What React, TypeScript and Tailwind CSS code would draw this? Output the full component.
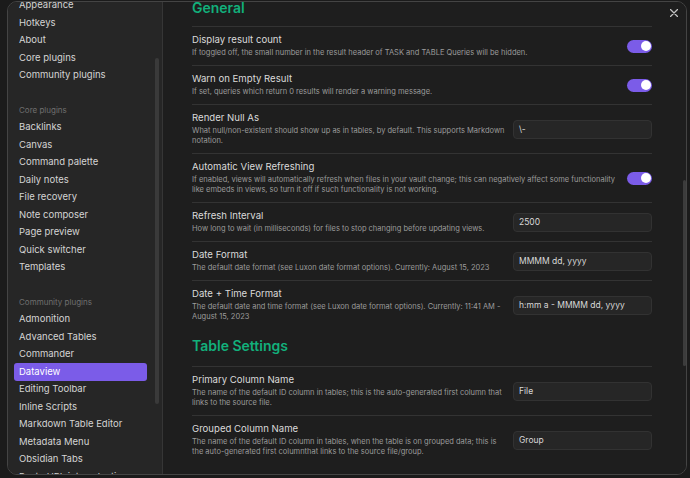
import React from "react";

const group1 = ["Appearance", "Hotkeys", "About", "Core plugins", "Community plugins"];
const group2 = [
  "Backlinks",
  "Canvas",
  "Command palette",
  "Daily notes",
  "File recovery",
  "Note composer",
  "Page preview",
  "Quick switcher",
  "Templates",
];
const group3 = [
  "Admonition",
  "Advanced Tables",
  "Commander",
  "Dataview",
  "Editing Toolbar",
  "Inline Scripts",
  "Markdown Table Editor",
  "Metadata Menu",
  "Obsidian Tabs",
  "Paste URL into selection",
];

function NavItem({ label }: { label: string }) {
  const active = label === "Dataview";
  return (
    <div
      className={
        active
          ? "ml-[6px] mr-[15px] h-[17.5px] flex items-center pl-[5px] rounded-[3px] bg-[#7b5ce8] text-white text-[9.5px] whitespace-nowrap"
          : "ml-[6px] mr-[15px] h-[17.5px] flex items-center pl-[5px] text-[#d4d4d4] text-[9.5px] whitespace-nowrap"
      }
    >
      {label}
    </div>
  );
}

function NavHeader({ label }: { label: string }) {
  return (
    <div className="ml-[6px] mr-[15px] h-[17.5px] flex items-center pl-[5px] text-[#6f6f6f] text-[8px] whitespace-nowrap">
      {label}
    </div>
  );
}

function Toggle() {
  return (
    <div className="w-[25px] h-[13px] rounded-full bg-[#7b5ce8] flex items-center justify-end pr-[1.5px] shrink-0">
      <div className="w-[10px] h-[10px] rounded-full bg-white" />
    </div>
  );
}

function TextInput({ value }: { value: string }) {
  return (
    <div className="w-[139px] h-[19px] rounded-[4px] bg-[#262626] border border-[#323232] flex items-center pl-[5px] text-[8.5px] text-[#d8d8d8] shrink-0 whitespace-nowrap">
      {value}
    </div>
  );
}

function Setting({
  title,
  desc,
  control,
}: {
  title: string;
  desc: string[];
  control: React.ReactNode;
}) {
  return (
    <div className="border-t border-[#333333] pt-[7px] pb-[7px] flex items-center justify-between">
      <div className="flex flex-col">
        <div className="text-[9.6px] leading-[12px] text-[#dadada] whitespace-nowrap">{title}</div>
        <div className="mt-[2px] text-[7.5px] leading-[10px] text-[#9b9b9b] whitespace-nowrap">
          {desc.map((d, i) => (
            <div key={i}>{d}</div>
          ))}
        </div>
      </div>
      {control}
    </div>
  );
}

function Heading({ text }: { text: string }) {
  return (
    <div className="h-[18px] leading-[18px] text-[14px] font-semibold text-[#12b07b] whitespace-nowrap">
      {text}
    </div>
  );
}

export default function App() {
  return (
    <div className="w-[690px] h-[478px] bg-[#1b1b1b] pl-[7px] pt-[1px] pr-[3px] pb-[3px] flex [font-family:Inter,sans-serif]">
      <div className="flex-1 flex border border-[#444444] rounded-[10px] overflow-hidden">
        {/* Sidebar */}
        <div className="relative w-[155px] shrink-0 bg-[#262626] border-r border-[#363636] overflow-hidden">
          <div className="mt-[-5.5px] flex flex-col">
            {group1.map((l) => (
              <NavItem key={l} label={l} />
            ))}
            <div className="mt-[17px]">
              <NavHeader label="Core plugins" />
            </div>
            {group2.map((l) => (
              <NavItem key={l} label={l} />
            ))}
            <div className="mt-[17px]">
              <NavHeader label="Community plugins" />
            </div>
            {group3.map((l) => (
              <NavItem key={l} label={l} />
            ))}
          </div>
          <div className="absolute right-[3px] top-[56px] w-[4px] h-[346px] rounded-full bg-[#3a3a3a]" />
        </div>

        {/* Content */}
        <div className="relative flex-1 bg-[#1e1e1e] overflow-hidden">
          <div className="mt-[-3px] pl-[29px] pr-[34px]">
            <div className="mb-[9px]">
              <Heading text="General" />
            </div>
            <Setting
              title="Display result count"
              desc={[
                "If toggled off, the small number in the result header of TASK and TABLE Queries will be hidden.",
              ]}
              control={<Toggle />}
            />
            <Setting
              title="Warn on Empty Result"
              desc={["If set, queries which return 0 results will render a warning message."]}
              control={<Toggle />}
            />
            <Setting
              title="Render Null As"
              desc={[
                "What null/non-existent should show up as in tables, by default. This supports Markdown",
                "notation.",
              ]}
              control={<TextInput value="\-" />}
            />
            <Setting
              title="Automatic View Refreshing"
              desc={[
                "If enabled, views will automatically refresh when files in your vault change; this can negatively affect some functionality",
                "like embeds in views, so turn it off if such functionality is not working.",
              ]}
              control={<Toggle />}
            />
            <Setting
              title="Refresh Interval"
              desc={["How long to wait (in milliseconds) for files to stop changing before updating views."]}
              control={<TextInput value="2500" />}
            />
            <Setting
              title="Date Format"
              desc={["The default date format (see Luxon date format options). Currently: August 15, 2023"]}
              control={<TextInput value="MMMM dd, yyyy" />}
            />
            <Setting
              title="Date + Time Format"
              desc={[
                "The default date and time format (see Luxon date format options). Currently: 11:41 AM -",
                "August 15, 2023",
              ]}
              control={<TextInput value="h:mm a - MMMM dd, yyyy" />}
            />
            <div className="mt-[8px] mb-[11px]">
              <Heading text="Table Settings" />
            </div>
            <Setting
              title="Primary Column Name"
              desc={[
                "The name of the default ID column in tables; this is the auto-generated first column that",
                "links to the source file.",
              ]}
              control={<TextInput value="File" />}
            />
            <Setting
              title="Grouped Column Name"
              desc={[
                "The name of the default ID column in tables, when the table is on grouped data; this is",
                "the auto-generated first columnthat links to the source file/group.",
              ]}
              control={<TextInput value="Group" />}
            />
          </div>

          {/* close button */}
          <div className="absolute top-[6px] right-[7px] w-[10px] h-[10px] flex items-center justify-center">
            <svg width="8" height="8" viewBox="0 0 8 8">
              <path d="M0.5 0.5 L7.5 7.5 M7.5 0.5 L0.5 7.5" stroke="#c4c4c4" strokeWidth="1.3" strokeLinecap="round" />
            </svg>
          </div>

          {/* scrollbar */}
          <div className="absolute right-[0px] top-[178px] w-[3px] h-[186px] rounded-full bg-[#3c3c3c]" />
        </div>
      </div>
    </div>
  );
}
